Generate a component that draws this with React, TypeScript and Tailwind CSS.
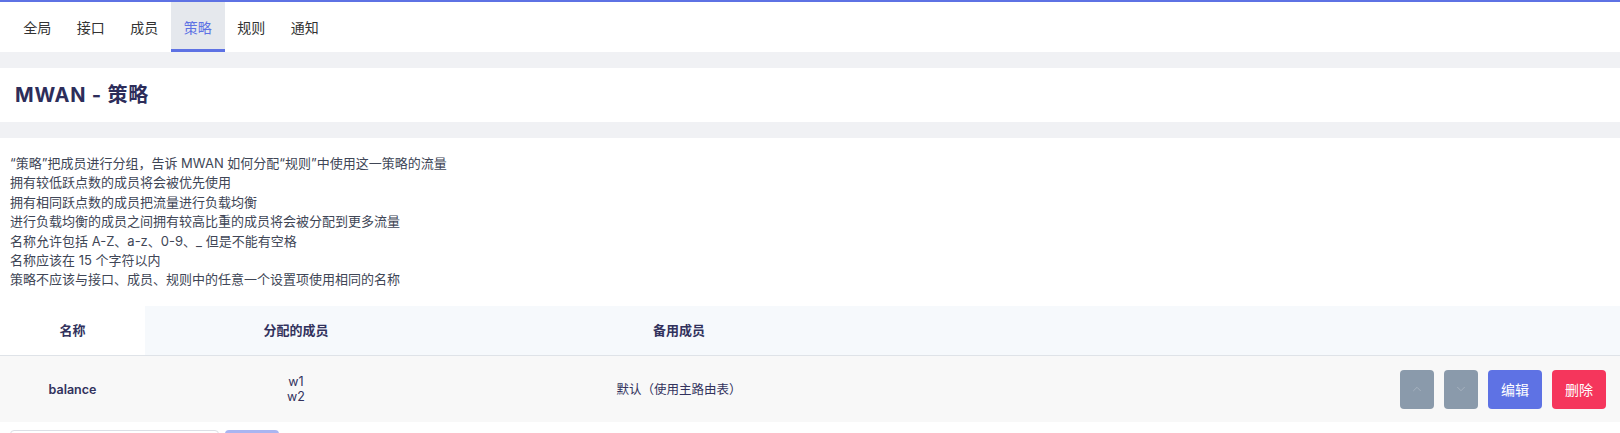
import React from 'react';
import { ChevronUp, ChevronDown } from 'lucide-react';

const font = { fontFamily: '"Inter", "Noto Sans CJK SC", sans-serif' };

const tabs = ['全局', '接口', '成员', '策略', '规则', '通知'];

const notes = [
  '“策略”把成员进行分组，告诉 MWAN 如何分配“规则”中使用这一策略的流量',
  '拥有较低跃点数的成员将会被优先使用',
  '拥有相同跃点数的成员把流量进行负载均衡',
  '进行负载均衡的成员之间拥有较高比重的成员将会被分配到更多流量',
  '名称允许包括 A-Z、a-z、0-9、_ 但是不能有空格',
  '名称应该在 15 个字符以内',
  '策略不应该与接口、成员、规则中的任意一个设置项使用相同的名称',
];

export default function App() {
  return (
    <div className="w-[1620px] h-[433px] overflow-hidden bg-[#f0f1f4]" style={font}>
      {/* Tabs */}
      <div className="bg-white border-t-2 border-[#5e72e4]">
        <nav className="flex h-[50px] pl-[10.5px]">
          {tabs.map((t) => (
            <div
              key={t}
              className={
                t === '策略'
                  ? 'flex items-center px-[12.75px] text-[14px] bg-[#e5e8ed] text-[#5e72e4] shadow-[inset_0_-3px_0_#5e72e4]'
                  : 'flex items-center px-[12.75px] text-[14px] text-[#333]'
              }
            >
              {t}
            </div>
          ))}
        </nav>
      </div>

      {/* Title */}
      <div className="mt-4 h-[54px] bg-white flex items-center px-[15px]">
        <h2 className="text-[20px] font-bold tracking-[0.8px] text-[#2d2d5a] leading-none">MWAN - 策略</h2>
      </div>

      {/* Content */}
      <div className="mt-4 bg-white h-[295px]">
        <div className="px-[10px] pt-[16px] text-[13px] leading-[19.4px] text-[#404656]">
          {notes.map((n) => (
            <div key={n}>{n}</div>
          ))}
        </div>

        <table className="mt-[16px] w-full table-fixed border-collapse">
          <colgroup>
            <col className="w-[145px]" />
            <col className="w-[302px]" />
            <col className="w-[464px]" />
            <col />
          </colgroup>
          <thead>
            <tr className="h-[50px] bg-[#f6f9fc] border-b border-[#dfe3e8] text-[13px] font-bold text-[#32325d]">
              <th className="bg-white font-bold">名称</th>
              <th className="font-bold">分配的成员</th>
              <th className="font-bold">备用成员</th>
              <th />
            </tr>
          </thead>
          <tbody>
            <tr className="h-[66px] bg-[#f8f8f8] text-[12.5px] text-[#32325d]">
              <td className="text-center font-semibold pt-[2px]">balance</td>
              <td className="text-center leading-[15px]">
                <div>w1</div>
                <div>w2</div>
              </td>
              <td className="text-center pt-[2px]">默认（使用主路由表）</td>
              <td className="pr-[14px]">
                <div className="flex justify-end gap-[10px]">
                  <button className="w-[34px] h-[39px] rounded-[4px] bg-[#8a9aab] flex items-center justify-center">
                    <ChevronUp className="w-[14px] h-[14px] text-[#a8b3c0]" strokeWidth={1.5} />
                  </button>
                  <button className="w-[34px] h-[39px] rounded-[4px] bg-[#8a9aab] flex items-center justify-center">
                    <ChevronDown className="w-[14px] h-[14px] text-[#a8b3c0]" strokeWidth={1.5} />
                  </button>
                  <button className="w-[54px] h-[39px] rounded-[4px] bg-[#5e72e4] text-white text-[14px]">编辑</button>
                  <button className="w-[54px] h-[39px] rounded-[4px] bg-[#f5365c] text-white text-[14px]">删除</button>
                </div>
              </td>
            </tr>
          </tbody>
        </table>

        <div className="mt-[8px] flex gap-[6px] px-[10px]">
          <div className="w-[209px] h-[36px] rounded-[4px] border border-[#dcdfe6] bg-white" />
          <div className="w-[54px] h-[36px] rounded-[4px] bg-[#a9b5f1]" />
        </div>
      </div>
    </div>
  );
}
